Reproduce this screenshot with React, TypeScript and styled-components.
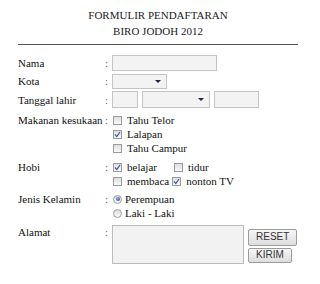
import React from 'react';
import styled, { createGlobalStyle } from 'styled-components';

const GlobalStyle = createGlobalStyle`
    html, body {
        margin: 0;
        padding: 0;
        background: #ffffff;
    }
    body {
        font-family: 'Liberation Serif', 'Times New Roman', serif;
        font-size: 11px;
        color: #111;
    }
`;

const Wrapper = styled.div`
    width: 280px;
    margin-left: 18px;
    padding-top: 7px;
`;

const Title = styled.div`
    text-align: center;
    font-size: 11px;
    line-height: 16px;
    color: #222;
`;

const Divider = styled.div`
    border-top: 1px solid #555;
    margin-top: 5px;
    margin-bottom: 9px;
`;

const Row = styled.div<{ top?: boolean; space?: number; height?: number }>`
    display: grid;
    grid-template-columns: 87px 7px 1fr;
    align-items: ${({ top }) => (top ? 'start' : 'center')};
    margin-top: ${({ space }) => space ?? 0}px;
    min-height: ${({ height }) => height ?? 0}px;
    line-height: 14px;
`;

const Label = styled.span`
    color: #111;
    white-space: nowrap;
`;

const Colon = styled.span`
    color: #666;
`;

const Field = styled.div`
    display: flex;
    align-items: center;
    gap: 4px;
`;

const Lines = styled.div`
    display: flex;
    flex-direction: column;
`;

const Line = styled.div`
    display: flex;
    align-items: center;
    height: 14px;
`;

const TextInput = styled.div<{ w: number; h: number }>`
    width: ${({ w }) => w}px;
    height: ${({ h }) => h}px;
    box-sizing: border-box;
    border: 1px solid #c4c4c4;
    background: #f3f3f3;
`;

const SelectBox = styled.div<{ w: number; h: number }>`
    width: ${({ w }) => w}px;
    height: ${({ h }) => h}px;
    box-sizing: border-box;
    border: 1px solid #c4c4c4;
    background: #f3f3f3;
    display: flex;
    align-items: center;
    justify-content: flex-end;
    padding-right: 5px;
`;

const Arrow = styled.span`
    width: 0;
    height: 0;
    border-left: 3px solid transparent;
    border-right: 3px solid transparent;
    border-top: 3px solid #1c2450;
`;

const Option = styled.label<{ after?: number }>`
    display: inline-flex;
    align-items: center;
    margin-right: ${({ after }) => after ?? 0}px;
    white-space: nowrap;
`;

const Box = styled.span`
    width: 9px;
    height: 9px;
    box-sizing: border-box;
    border: 1px solid #9b9b9b;
    background: linear-gradient(#dedede, #fafafa);
    margin: 0 5px 0 1px;
    display: inline-flex;
    align-items: center;
    justify-content: center;
`;

const Circle = styled(Box)`
    border-radius: 50%;
    margin: 0 3px 0 1px;
`;

const Dot = styled.span`
    width: 4px;
    height: 4px;
    border-radius: 50%;
    background: radial-gradient(circle at 35% 35%, #8aa6e6, #24479a);
`;

const TextArea = styled.div`
    width: 132px;
    height: 39px;
    box-sizing: border-box;
    border: 1px solid #bcbcbc;
    background: #f2f2f2;
`;

const Buttons = styled.div`
    display: flex;
    flex-direction: column;
    align-items: flex-start;
    gap: 2px;
    margin-top: 2px;
`;

const Button = styled.button<{ h: number }>`
    height: ${({ h }) => h}px;
    padding: 0 7px;
    box-sizing: border-box;
    border: 1px solid #9c9c9c;
    border-radius: 2px;
    background: linear-gradient(#f7f7f7, #dddddd);
    font-family: 'Liberation Sans', Arial, sans-serif;
    font-size: 10px;
    color: #333;
    line-height: 1;
`;

const Check = ({ checked }: { checked?: boolean }) => (
    <Box>
        {checked && (
            <svg width="7" height="7" viewBox="0 0 7 7">
                <polyline points="1,3.5 2.8,5.6 6,1" fill="none" stroke="#3b56a8" strokeWidth="1.2" />
            </svg>
        )}
    </Box>
);

const Radio = ({ checked }: { checked?: boolean }) => <Circle>{checked && <Dot />}</Circle>;

export default function App() {
    return (
        <>
            <GlobalStyle />
            <Wrapper>
                <Title>
                    FORMULIR PENDAFTARAN
                    <br />
                    BIRO JODOH 2012
                </Title>
                <Divider />

                <Row height={18}>
                    <Label>Nama</Label>
                    <Colon>:</Colon>
                    <Field>
                        <TextInput w={105} h={16} />
                    </Field>
                </Row>
                <Row height={18}>
                    <Label>Kota</Label>
                    <Colon>:</Colon>
                    <Field>
                        <SelectBox w={55} h={15}>
                            <Arrow />
                        </SelectBox>
                    </Field>
                </Row>
                <Row height={19}>
                    <Label>Tanggal lahir</Label>
                    <Colon>:</Colon>
                    <Field>
                        <TextInput w={26} h={17} />
                        <SelectBox w={68} h={17}>
                            <Arrow />
                        </SelectBox>
                        <TextInput w={45} h={17} />
                    </Field>
                </Row>

                <Row top space={4}>
                    <Label>Makanan kesukaan</Label>
                    <Colon>:</Colon>
                    <Lines>
                        <Line>
                            <Option>
                                <Check />
                                Tahu Telor
                            </Option>
                        </Line>
                        <Line>
                            <Option>
                                <Check checked />
                                Lalapan
                            </Option>
                        </Line>
                        <Line>
                            <Option>
                                <Check />
                                Tahu Campur
                            </Option>
                        </Line>
                    </Lines>
                </Row>

                <Row top space={5}>
                    <Label>Hobi</Label>
                    <Colon>:</Colon>
                    <Lines>
                        <Line>
                            <Option after={16}>
                                <Check checked />
                                belajar
                            </Option>
                            <Option>
                                <Check />
                                tidur
                            </Option>
                        </Line>
                        <Line>
                            <Option after={2}>
                                <Check />
                                membaca
                            </Option>
                            <Option>
                                <Check checked />
                                nonton TV
                            </Option>
                        </Line>
                    </Lines>
                </Row>

                <Row top space={4}>
                    <Label>Jenis Kelamin</Label>
                    <Colon>:</Colon>
                    <Lines>
                        <Line>
                            <Option>
                                <Radio checked />
                                Perempuan
                            </Option>
                        </Line>
                        <Line>
                            <Option>
                                <Radio />
                                Laki - Laki
                            </Option>
                        </Line>
                    </Lines>
                </Row>

                <Row top space={5}>
                    <Label>Alamat</Label>
                    <Colon>:</Colon>
                    <Field>
                        <TextArea />
                        <Buttons>
                            <Button h={17}>RESET</Button>
                            <Button h={15}>KIRIM</Button>
                        </Buttons>
                    </Field>
                </Row>
            </Wrapper>
        </>
    );
}
